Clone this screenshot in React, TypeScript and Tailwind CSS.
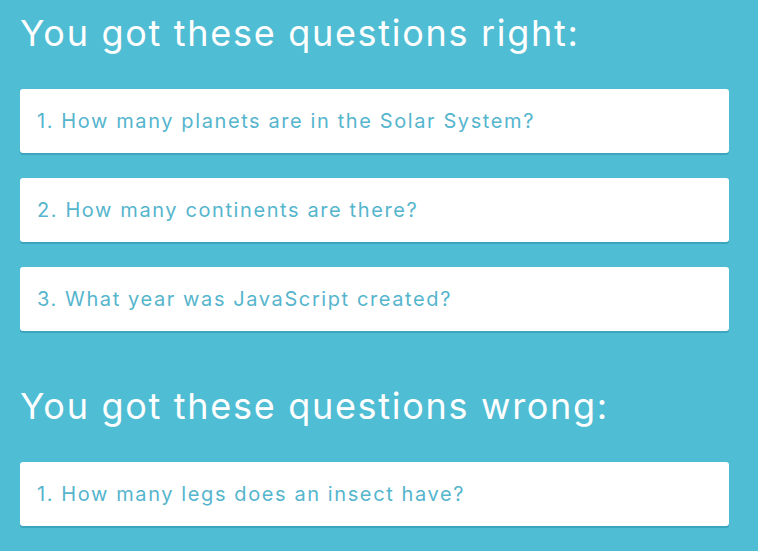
const right = [
  "1. How many planets are in the Solar System?",
  "2. How many continents are there?",
  "3. What year was JavaScript created?",
];

const wrong = ["1. How many legs does an insect have?"];

const QuestionCard = ({ text }: { text: string }) => {
  return (
    <div className="h-[64px] flex items-center px-[17px] bg-white rounded-[3px] shadow-[0_2px_0_#3aa5bc]">
      <span className="text-[20px] tracking-[1.6px] text-[#55b5cd]">{text}</span>
    </div>
  );
};

export default function App() {
  return (
    <div
      className="w-full min-h-screen bg-[#4fbdd4] pl-5 pt-[11px]"
      style={{ fontFamily: "Inter, 'Liberation Sans', sans-serif" }}
    >
      <div className="w-[709px]">
        <h1 className="text-[36px] leading-[44px] tracking-[1.7px] text-white">
          You got these questions right:
        </h1>
        <div className="mt-[34px] flex flex-col gap-[25px]">
          {right.map((q) => (
            <QuestionCard key={q} text={q} />
          ))}
        </div>
        <h1 className="mt-[53px] text-[36px] leading-[44px] tracking-[1.7px] text-white">
          You got these questions wrong:
        </h1>
        <div className="mt-[34px] flex flex-col gap-[25px]">
          {wrong.map((q) => (
            <QuestionCard key={q} text={q} />
          ))}
        </div>
      </div>
    </div>
  );
}
